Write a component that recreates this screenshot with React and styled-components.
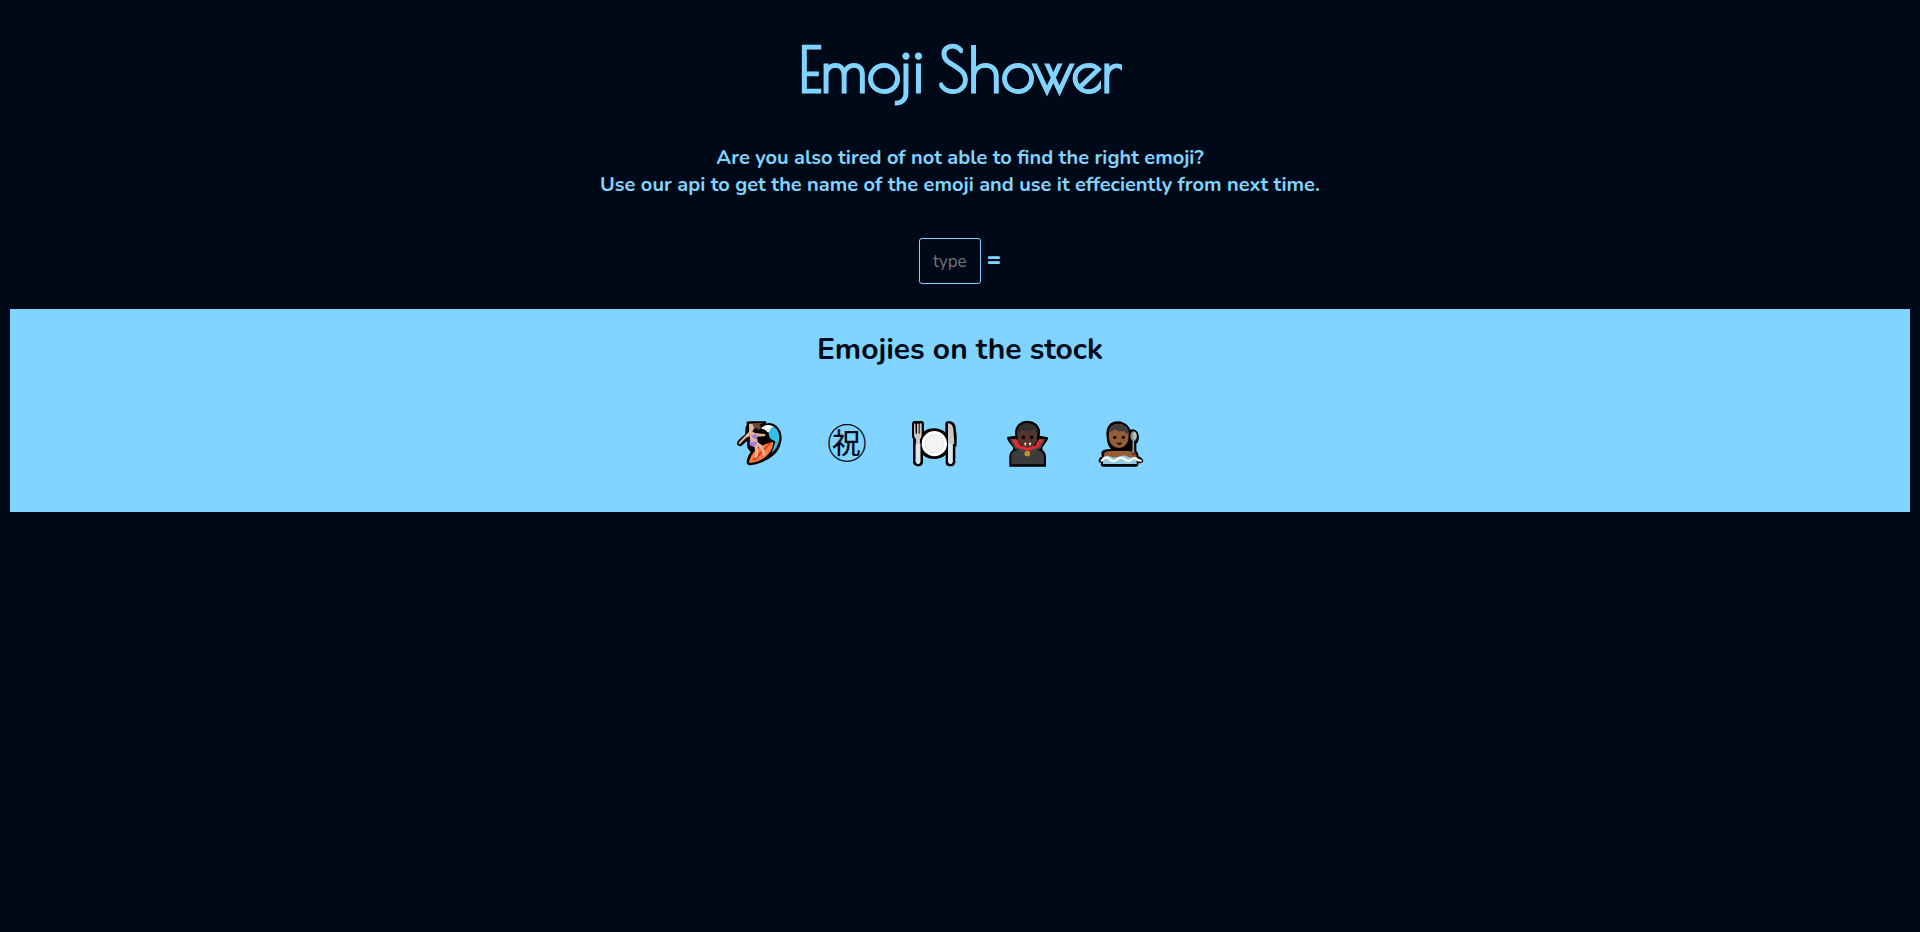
import React, { useState } from "react";
import styled, { createGlobalStyle } from "styled-components";

const ink = "#000918";
const sky = "#80d4ff";

const GlobalStyle = createGlobalStyle`
  *, *::before, *::after { box-sizing: border-box; }
  body {
    margin: 0;
    background: ${ink};
    color: ${sky};
    font-family: "Nunito", "Lato", "Noto Sans CJK JP", sans-serif;
  }
`;

const Page = styled.main`
  padding: 29px 10px 0;
  text-align: center;
`;

const Title = styled.h1`
  margin: 0;
  font-family: "Poiret One", "Lato", sans-serif;
  font-size: 61px;
  font-weight: 700;
  line-height: 80px;
  -webkit-text-stroke: 1px ${sky};
`;

const Intro = styled.p`
  margin: 35px 0 0;
  font-size: 20px;
  font-weight: 700;
  line-height: 27px;
`;

const Lookup = styled.form`
  display: flex;
  align-items: center;
  justify-content: center;
  gap: 6px;
  margin: 40px 0 25px;
`;

const EmojiInput = styled.input`
  width: 62px;
  height: 46px;
  padding: 0 4px;
  border: 1px solid ${sky};
  border-radius: 3px;
  background: transparent;
  color: ${sky};
  font: 400 17px "Nunito", "Lato", sans-serif;
  text-align: center;
  &::placeholder { color: #757575; }
`;

const Result = styled.output`
  padding-bottom: 4px;
  font-size: 24px;
  font-weight: 900;
  line-height: 28px;
`;

const Stock = styled.section`
  padding: 21px 0 43px;
  background: ${sky};
  color: ${ink};
`;

const StockTitle = styled.h2`
  margin: 0;
  font-size: 30px;
  font-weight: 700;
  line-height: 40px;
`;

const EmojiRow = styled.div`
  display: flex;
  flex-wrap: wrap;
  align-items: center;
  justify-content: center;
  gap: 42px;
  margin-top: 48px;
  padding-right: 40px;
`;

const EmojiButton = styled.button`
  display: block;
  height: 51px;
  margin: 0;
  padding: 0;
  border: 0;
  background: none;
  color: inherit;
  cursor: pointer;
`;

const Glyph = styled.span`
  display: block;
  padding-bottom: 4px;
  font: 400 40px/47px "Noto Sans CJK JP", sans-serif;
`;

const Art = styled.svg`
  display: block;
  width: 51px;
  height: 51px;
`;

const Surfer = () => (
  <Art viewBox="27 24 153 153" aria-hidden="true">
    <path
      d="M64 37Q68 33 78 34L122 34Q126 37 122 41Q140 34 155 48Q171 63 170 86Q168 115 146 136Q120 159 78 166Q63 166 65 153Q67 138 77 126L69 116Q65 112 67 92L50 107Q42 111 37 104Q33 97 43 88L61 72Q60 50 66 43Z"
      fill="#000"
    />
    <path d="M112 53Q125 39 144 49Q165 61 163 88Q159 112 140 130L151 96Q146 90 138 87Q128 77 132 62Q120 57 112 53Z" fill="#35bfe4" />
    <path d="M110 53Q127 38 147 51Q136 50 134 62Q130 72 124 63Q118 56 110 57Z" fill="#fff" />
    <path d="M72 159Q75 132 98 116Q116 101 144 96Q147 119 121 141Q101 157 72 159Z" fill="#ff7a3d" />
    <path d="M80 151L133 98L139 99L92 151Z" fill="#dc3f20" />
    <path d="M72 41L83 41L89 51L82 65L91 69L119 72Q124 75 119 79L96 80L98 96L111 106L119 124L122 139L114 135L108 118L99 110L99 137L93 144L86 142L91 134L89 112L74 103L75 79L64 83L44 103Q39 102 42 97L63 74L72 65Z" fill="#e6b396" />
    <path d="M82 40L116 38L103 44L109 54L99 61L96 54L88 58Z" fill="#68483d" />
    <path d="M74 72L79 76L88 75L91 69L96 75L95 88L77 89L74 98L76 107Q87 112 96 103L94 94Z" fill="#a47be8" />
    <path d="M76 87L93 87L94 95L77 95Z" fill="#e6b396" />
  </Art>
);

const Plate = () => (
  <Art viewBox="27 24 153 153" aria-hidden="true">
    <path
      d="M42 33L67 33Q72 35 72 41L72 64Q84 55 102 55Q121 55 136 67L136 39Q138 33 146 33Q162 34 166 47L170 76L170 105Q170 110 166 111L166 158Q164 169 150 169Q138 169 137 159L137 134Q123 147 102 147Q82 147 69 135L69 158Q67 169 54 169Q40 168 39 157L39 87Q35 81 36 73L36 41Q36 35 42 33Z"
      fill="#000"
    />
    <path d="M42 42Q43 38 46 42L47 71H51V42Q53 39 56 42V71H59V42Q62 38 65 42V75Q65 83 60 88L61 155Q60 162 53 162Q47 160 47 154L48 88Q42 83 42 75Z" fill="#ccc8c7" />
    <path d="M47 101H61V155Q60 162 54 162Q47 160 47 154Z" fill="#d8e8ee" />
    <path d="M144 40Q158 40 160 58L163 102H158V155Q157 162 151 162Q144 161 144 154Z" fill="#ccc8c7" />
    <path d="M144 102H158V155Q157 162 151 162Q144 161 144 154Z" fill="#d8e8ee" />
    <circle cx="103" cy="101" r="38" fill="#fff" />
    <circle cx="103" cy="101" r="27" fill="#f5f2f4" stroke="#d7d2d6" strokeWidth="2" />
  </Art>
);

const Vampire = () => (
  <Art viewBox="21 24 153 153" aria-hidden="true">
    <path d="M36 81L61 77Q57 57 68 45Q79 32 98 32Q117 33 128 46Q138 59 134 77L159 82Q160 90 153 97L143 111L142 119Q153 127 153 142L153 170H43V139Q43 127 54 119L54 112L43 98Q36 89 36 81Z" fill="#000" />
    <path d="M49 163V140Q50 124 67 120L129 120Q146 124 147 141V163Z" fill="#3c3c3c" />
    <path d="M43 86L66 86L72 107L96 124L125 108L132 86L152 87L136 116L113 123L97 134L80 123L60 116Z" fill="#454545" />
    <path d="M50 88L66 89L76 107L121 107L130 89L146 88L131 112L97 123L64 112Z" fill="#e02c35" />
    <path d="M68 84Q64 64 70 55Q76 42 98 40Q121 42 127 60L126 92Q121 110 97 113Q75 110 69 94Z" fill="#54352d" />
    <path d="M67 71Q67 40 98 40Q128 41 129 71Q124 68 119 58Q98 72 77 58Q75 69 67 71Z" fill="#303030" />
    <ellipse cx="85" cy="82" rx="5" ry="6" fill="#000" />
    <ellipse cx="110" cy="82" rx="5" ry="6" fill="#000" />
    <path d="M85 98Q98 95 111 98L106 105H90Z" fill="#701b1c" />
    <path d="M87 98L95 98L91 109ZM101 98L109 98L105 109Z" fill="#fff" />
    <circle cx="97" cy="131" r="8" fill="#cfa51e" />
    <path d="M91 126L97 131L104 127M97 131V138" stroke="#8b771e" strokeWidth="2" fill="none" />
  </Art>
);

const Bather = () => (
  <Art viewBox="30 24 153 153" aria-hidden="true">
    <path d="M49 126Q54 117 78 117Q66 105 65 84Q60 54 77 40Q94 29 116 38Q130 44 136 59Q149 54 157 65Q165 78 159 96L154 101V122Q161 128 161 139Q174 145 175 153Q174 160 160 160Q161 169 154 170H54Q45 169 48 159Q38 157 42 147Q43 142 50 140Z" fill="#000" />
    <path d="M57 133Q57 123 78 123H128Q148 123 154 136V149H57Z" fill="#965c34" />
    <path d="M72 67Q75 40 101 41Q127 43 131 68L130 90Q124 112 103 114Q84 113 76 99Q70 88 72 67Z" fill="#965c34" />
    <path d="M74 67Q75 42 102 42Q129 42 133 72Q123 72 117 62Q103 68 88 57Q82 66 74 67Z" fill="#3d3d3d" />
    <circle cx="89" cy="82" r="5" fill="#000" />
    <circle cx="115" cy="82" r="5" fill="#000" />
    <path d="M94 97Q102 100 111 97Q109 106 102 106Q96 105 94 97Z" fill="#211612" />
    <path d="M54 142Q65 134 78 140Q93 146 105 138Q118 134 129 140Q142 146 155 140V162H54Z" fill="#92cae5" />
    <path d="M50 152Q57 142 64 143Q70 143 77 150Q83 156 94 150Q105 140 116 146Q128 156 138 150Q146 142 153 146Q159 152 167 152" fill="none" stroke="#fff" strokeWidth="7" strokeLinecap="round" />
    <path d="M138 124Q142 118 149 122L153 132Q149 138 142 134Z" fill="#5d3827" />
    <path d="M145 92V128" stroke="#979b9d" strokeWidth="5" />
    <ellipse cx="146" cy="79" rx="10" ry="15" fill="#889094" />
    <ellipse cx="149" cy="77" rx="5" ry="11" fill="#b8bdbf" />
  </Art>
);

const stock = [
  { name: "woman surfing", art: <Surfer /> },
  { name: "Japanese congratulations button", art: <Glyph>{"\u3297"}</Glyph> },
  { name: "fork and knife with plate", art: <Plate /> },
  { name: "vampire", art: <Vampire /> },
  { name: "merman", art: <Bather /> },
];

export default function App() {
  const [value, setValue] = useState("");
  const [name, setName] = useState("");
  return (
    <>
      <GlobalStyle />
      <Page>
        <Title>Emoji Shower</Title>
        <Intro>
          Are you also tired of not able to find the right emoji?
          <br />
          Use our api to get the name of the emoji and use it effeciently from next time.
        </Intro>
        <Lookup onSubmit={(event) => event.preventDefault()}>
          <EmojiInput
            id="emoji"
            aria-label="Emoji"
            placeholder="type"
            value={value}
            onChange={(event) => setValue(event.target.value)}
          />
          <Result htmlFor="emoji">= {name}</Result>
        </Lookup>
        <Stock>
          <StockTitle>Emojies on the stock</StockTitle>
          <EmojiRow>
            {stock.map((item) => (
              <EmojiButton key={item.name} type="button" aria-label={item.name} onClick={() => setName(item.name)}>
                {item.art}
              </EmojiButton>
            ))}
          </EmojiRow>
        </Stock>
      </Page>
    </>
  );
}
